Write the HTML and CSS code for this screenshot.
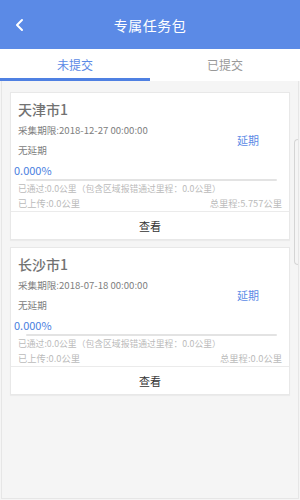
FILE: index.html
```html
<!DOCTYPE html>
<html lang="zh">
<head>
<meta charset="utf-8">
<link rel="stylesheet" href="styles.css">
</head>
<body>
<div class="app">
  <header class="topbar">
    <svg class="back" width="12" height="14" viewBox="0 0 12 14"><path d="M8 2 L3 7 L8 12" fill="none" stroke="#fff" stroke-width="2" stroke-linecap="round" stroke-linejoin="round"/></svg>
    <h1 class="title">专属任务包</h1>
  </header>
  <nav class="tabs">
    <div class="tab active">未提交</div>
    <div class="tab">已提交</div>
  </nav>
  <main class="list">
    <section class="card">
      <div class="card-body">
        <div class="name">天津市1</div>
        <div class="row">
          <div class="info">
            <div class="line">采集期限:2018-12-27 00:00:00</div>
            <div class="line">无延期</div>
          </div>
          <div class="extend">延期</div>
        </div>
        <div class="pct">0.000%</div>
        <div class="bar"></div>
        <div class="meta">已通过:0.0公里（包含区域报错通过里程：0.0公里）</div>
        <div class="meta split"><span>已上传:0.0公里</span><span>总里程:5.757公里</span></div>
      </div>
      <div class="action">查看</div>
    </section>
    <section class="card">
      <div class="card-body">
        <div class="name">长沙市1</div>
        <div class="row">
          <div class="info">
            <div class="line">采集期限:2018-07-18 00:00:00</div>
            <div class="line">无延期</div>
          </div>
          <div class="extend">延期</div>
        </div>
        <div class="pct">0.000%</div>
        <div class="bar"></div>
        <div class="meta">已通过:0.0公里（包含区域报错通过里程：0.0公里）</div>
        <div class="meta split"><span>已上传:0.0公里</span><span>总里程:0.0公里</span></div>
      </div>
      <div class="action">查看</div>
    </section>
    <div class="scroll-edge"></div>
  </main>
</div>
</body>
</html>
```
FILE: styles.css
```css
* { box-sizing: border-box; margin: 0; padding: 0; }
html, body { width: 300px; height: 500px; overflow: hidden; }
body {
  font-family: "Noto Sans CJK SC", "Noto Sans", sans-serif;
  background: #f5f5f5;
}
.app { display: flex; flex-direction: column; height: 500px; }
.topbar {
  height: 49px;
  background: #5b8ae6;
  display: flex;
  align-items: center;
  justify-content: center;
  position: relative;
}
.back { position: absolute; left: 14px; top: 18px; }
.title { color: #fff; font-size: 14px; font-weight: 400; letter-spacing: 0.5px; }
.tabs {
  height: 32px;
  background: #fff;
  display: flex;
}
.tab {
  flex: 1;
  display: flex;
  align-items: center;
  justify-content: center;
  font-size: 12px;
  color: #999;
  border-bottom: 3px solid transparent;
  padding-top: 2px;
}
.tab.active { color: #5b8ae6; border-bottom-color: #4f80e2; }
.list {
  flex: 1;
  position: relative;
  background: #f5f5f5;
  border: 1px solid #e6e6e6;
  border-top: none;
  margin: 0 1px 1px 1px;
  padding: 11px 8px 0 8px;
  display: flex;
  flex-direction: column;
  gap: 7px;
}
.card {
  background: #fff;
  border: 1px solid #e8e8e8;
  box-shadow: 0 1px 1px rgba(0,0,0,0.04);
}
.card-body { padding: 5px 6px 0 6px; }
.name { font-size: 14px; line-height: 22px; color: #727272; font-weight: 500; padding-left: 1px; }
.row { display: flex; align-items: center; justify-content: space-between; }
.line { font-size: 9.6px; line-height: 20px; color: #808080; padding-left: 1px; }
.extend { font-size: 11px; color: #5b8ae6; margin-right: 24px; }
.pct { font-size: 11px; line-height: 16px; color: #4a7ee0; margin-top: 2px; margin-left: -3px; }
.bar { height: 2px; background: #e3e3e3; margin: 1px 6px 0 9px; border-radius: 1px; }
.meta { font-size: 8.8px; line-height: 15px; color: #bbb; padding-left: 1px; white-space: nowrap; }
.split { display: flex; justify-content: space-between; padding-right: 1px; font-size: 9.3px; }
.action {
  border-top: 1px solid #ebebeb;
  height: 28px;
  display: flex;
  align-items: center;
  justify-content: center;
  font-size: 11px;
  color: #333;
}
.scroll-edge {
  position: absolute;
  right: 0;
  top: 58px;
  width: 4px;
  height: 126px;
  border: 1px solid #d5d5d5;
  border-right: none;
  border-radius: 4px 0 0 4px;
}
```
